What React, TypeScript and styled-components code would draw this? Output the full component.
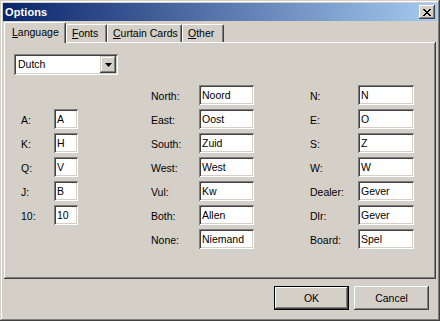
import React from 'react';
import styled, { createGlobalStyle } from 'styled-components';

const GlobalStyle = createGlobalStyle`
  html, body {
    margin: 0;
    padding: 0;
    background: #d4d0c8;
  }
  body {
    font-family: "Liberation Sans", Arial, sans-serif;
    font-size: 10.5px;
    color: #000;
  }
`;

const Window = styled.div`
  width: 440px;
  height: 321px;
  box-sizing: border-box;
  padding: 3px;
  background: #d4d0c8;
  box-shadow: inset -1px -1px 0 #404040, inset 1px 1px 0 #d4d0c8,
    inset -2px -2px 0 #808080, inset 2px 2px 0 #ffffff;
  display: flex;
  flex-direction: column;
`;

const TitleBar = styled.div`
  height: 18px;
  display: flex;
  align-items: center;
  justify-content: space-between;
  padding-left: 2px;
  background: linear-gradient(to right, #0a246a, #a6caf0);
`;

const Title = styled.span`
  color: #fff;
  font-weight: bold;
  font-size: 11px;
  letter-spacing: 0.1px;
`;

const CloseButton = styled.div`
  width: 16px;
  height: 14px;
  margin-right: 2px;
  box-sizing: border-box;
  background: #d4d0c8;
  box-shadow: inset -1px -1px 0 #404040, inset 1px 1px 0 #ffffff,
    inset -2px -2px 0 #808080;
  display: flex;
  align-items: center;
  justify-content: center;
`;

const Body = styled.div`
  flex: 1;
  display: flex;
  flex-direction: column;
  padding: 1px 1px 0 1px;
`;

const TabStrip = styled.div`
  height: 20px;
  display: flex;
  align-items: flex-end;
`;

const Tab = styled.div<{ $active?: boolean; $w: number }>`
  position: relative;
  z-index: ${p => (p.$active ? 1 : 0)};
  box-sizing: border-box;
  height: ${p => (p.$active ? '21px' : '18px')};
  margin-bottom: ${p => (p.$active ? '-1px' : '0')};
  width: ${p => p.$w}px;
  padding: ${p => (p.$active ? '3px 0 0 7px' : '2px 0 0 5px')};
  background: #d4d0c8;
  border-top: 1px solid #fff;
  border-left: 1px solid #fff;
  border-right: 1px solid #404040;
  border-radius: 2px 2px 0 0;
  box-shadow: inset -1px 0 0 #808080;
  white-space: nowrap;
`;

const Panel = styled.div`
  height: 237px;
  box-sizing: border-box;
  width: 432px;
  padding: 12px 0 0 10px;
  box-shadow: inset -1px -1px 0 #404040, inset 1px 1px 0 #ffffff,
    inset -2px -2px 0 #808080;
`;

const Select = styled.div`
  width: 104px;
  height: 21px;
  box-sizing: border-box;
  padding: 2px;
  background: #fff;
  box-shadow: inset 1px 1px 0 #808080, inset -1px -1px 0 #ffffff,
    inset 2px 2px 0 #404040, inset -2px -2px 0 #d4d0c8;
  display: flex;
  align-items: stretch;
`;

const SelectValue = styled.span`
  flex: 1;
  padding-left: 2px;
  line-height: 17px;
`;

const SelectArrow = styled.div`
  width: 16px;
  box-sizing: border-box;
  background: #d4d0c8;
  box-shadow: inset -1px -1px 0 #404040, inset 1px 1px 0 #d4d0c8,
    inset -2px -2px 0 #808080, inset 2px 2px 0 #ffffff;
  display: flex;
  align-items: center;
  justify-content: center;
`;

const Columns = styled.div`
  display: flex;
  align-items: flex-start;
  margin-top: 10px;
`;

const Column = styled.div<{ $offset: number; $top?: number; $label: number; $input: number }>`
  display: grid;
  grid-template-columns: ${p => p.$label}px ${p => p.$input}px;
  grid-auto-rows: 20px;
  row-gap: 4px;
  margin-left: ${p => p.$offset}px;
  margin-top: ${p => p.$top || 0}px;
`;

const Label = styled.span`
  line-height: 20px;
  padding-top: 1px;
`;

const Field = styled.div`
  box-sizing: border-box;
  height: 20px;
  padding: 2px 0 0 3px;
  line-height: 16px;
  background: #fff;
  box-shadow: inset 1px 1px 0 #808080, inset -1px -1px 0 #ffffff,
    inset 2px 2px 0 #404040, inset -2px -2px 0 #d4d0c8;
  white-space: nowrap;
  overflow: hidden;
`;

const Footer = styled.div`
  display: flex;
  justify-content: flex-end;
  gap: 5px;
  padding: 7px 7px 0 0;
`;

const Button = styled.div<{ $default?: boolean }>`
  width: 75px;
  height: 24px;
  box-sizing: border-box;
  display: flex;
  align-items: center;
  justify-content: center;
  background: #d4d0c8;
  box-shadow: ${p =>
    p.$default
      ? 'inset 0 0 0 1px #000, inset -2px -2px 0 #404040, inset 2px 2px 0 #ffffff, inset -3px -3px 0 #808080'
      : 'inset -1px -1px 0 #404040, inset 1px 1px 0 #ffffff, inset -2px -2px 0 #808080'};
`;

const tabs = [
  { key: 'L', rest: 'anguage', w: 62, active: true },
  { key: 'F', rest: 'onts', w: 41 },
  { key: 'C', rest: 'urtain Cards', w: 75 },
  { key: 'O', rest: 'ther', w: 42 },
];

const cards: [string, string][] = [
  ['A:', 'A'],
  ['K:', 'H'],
  ['Q:', 'V'],
  ['J:', 'B'],
  ['10:', '10'],
];

const seats: [string, string][] = [
  ['North:', 'Noord'],
  ['East:', 'Oost'],
  ['South:', 'Zuid'],
  ['West:', 'West'],
  ['Vul:', 'Kw'],
  ['Both:', 'Allen'],
  ['None:', 'Niemand'],
];

const shorts: [string, string][] = [
  ['N:', 'N'],
  ['E:', 'O'],
  ['S:', 'Z'],
  ['W:', 'W'],
  ['Dealer:', 'Gever'],
  ['Dlr:', 'Gever'],
  ['Board:', 'Spel'],
];

const renderRows = (rows: [string, string][]) =>
  rows.map(([label, value]) => (
    <React.Fragment key={label}>
      <Label>{label}</Label>
      <Field>{value}</Field>
    </React.Fragment>
  ));

const App: React.FC = () => {
  return (
    <>
      <GlobalStyle />
      <Window>
        <TitleBar>
          <Title>Options</Title>
          <CloseButton>
            <svg width="8" height="7" viewBox="0 0 8 7">
              <path d="M0 0h2v1h1v1h2V1h1V0h2v1H7v1H6v1H5v1h1v1h1v1h1v1H6V6H5V5H3v1H2v1H0V6h1V5h1V4h1V3H2V2H1V1H0z" fill="#000" />
            </svg>
          </CloseButton>
        </TitleBar>
        <Body>
          <TabStrip>
            {tabs.map(t => (
              <Tab key={t.key} $active={t.active} $w={t.w}>
                <u>{t.key}</u>
                {t.rest}
              </Tab>
            ))}
          </TabStrip>
          <Panel>
            <Select>
              <SelectValue>Dutch</SelectValue>
              <SelectArrow>
                <svg width="7" height="4" viewBox="0 0 7 4">
                  <path d="M0 0h7L3.5 4z" fill="#000" />
                </svg>
              </SelectArrow>
            </Select>
            <Columns>
              <Column $offset={7} $top={24} $label={33} $input={24}>
                {renderRows(cards)}
              </Column>
              <Column $offset={73} $label={48} $input={55}>
                {renderRows(seats)}
              </Column>
              <Column $offset={56} $label={48} $input={56}>
                {renderRows(shorts)}
              </Column>
            </Columns>
          </Panel>
          <Footer>
            <Button $default>OK</Button>
            <Button>Cancel</Button>
          </Footer>
        </Body>
      </Window>
    </>
  );
};

export default App;
